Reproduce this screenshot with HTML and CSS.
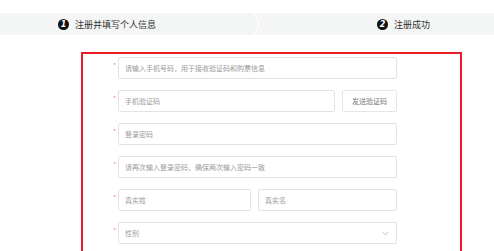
FILE: index.html
```html
<!DOCTYPE html>
<html lang="zh-CN">
<head>
    <meta charset="UTF-8">
    <meta name="viewport" content="width=device-width, initial-scale=1.0">
    <title>注册</title>
    <link rel="stylesheet" href="styles.css">
</head>
<body>
    <div class="steps">
        <div class="step step-one">
            <span class="step-num">1</span>
            <span class="step-text">注册并填写个人信息</span>
        </div>
        <svg class="step-arrow" width="8" height="22" viewBox="0 0 8 22">
            <polyline points="1,0 6,11 1,22" fill="none" stroke="#ffffff" stroke-width="1.2"/>
        </svg>
        <div class="step step-two">
            <span class="step-num">2</span>
            <span class="step-text">注册成功</span>
        </div>
    </div>

    <form class="reg-box">
        <div class="row">
            <span class="star">*</span>
            <input class="field w-full" type="text" placeholder="请输入手机号码，用于接收验证码和购票信息">
        </div>
        <div class="row">
            <span class="star">*</span>
            <input class="field w-code" type="text" placeholder="手机验证码">
            <button type="button" class="send-btn">发送验证码</button>
        </div>
        <div class="row">
            <span class="star">*</span>
            <input class="field w-full" type="password" placeholder="登录密码">
        </div>
        <div class="row">
            <span class="star">*</span>
            <input class="field w-full" type="password" placeholder="请再次输入登录密码，确保两次输入密码一致">
        </div>
        <div class="row">
            <span class="star">*</span>
            <input class="field w-surname" type="text" placeholder="真实姓">
            <input class="field w-name" type="text" placeholder="真实名">
        </div>
        <div class="row">
            <span class="star">*</span>
            <div class="field w-full select">
                <span>性别</span>
                <svg width="7" height="5" viewBox="0 0 7 5">
                    <polyline points="0.5,0.8 3.5,3.8 6.5,0.8" fill="none" stroke="#b8b8b8" stroke-width="0.9"/>
                </svg>
            </div>
        </div>
    </form>
</body>
</html>
```

FILE: styles.css
```css
body {
    margin: 0;
    padding: 0;
    background-color: #fff;
    font-family: "Noto Sans CJK SC", "Liberation Sans", sans-serif;
}

.steps {
    margin-top: 13px;
    height: 22px;
    background-color: #f4f5f5;
    display: flex;
    align-items: center;
}

.step {
    display: flex;
    align-items: center;
    height: 22px;
}

.step-one {
    width: 195px;
    padding-left: 58px;
}

.step-two {
    margin-left: 116px;
}

.step-arrow {
    display: block;
}

.step-num {
    width: 11px;
    height: 11px;
    border-radius: 50%;
    background-color: #111;
    color: #fff;
    font-family: "DejaVu Sans", sans-serif;
    font-size: 8px;
    font-weight: bold;
    font-style: italic;
    line-height: 11px;
    text-align: center;
    margin-right: 6px;
}

.step-text {
    font-size: 9px;
    color: #333;
    line-height: 11px;
}

.reg-box {
    margin: 17px 0 0 81px;
    width: 377px;
    height: 220px;
    border: 2px solid #ec1c24;
    padding-top: 3px;
}

.row {
    display: flex;
    align-items: center;
    margin-bottom: 11px;
    padding-left: 30px;
}

.star {
    width: 5px;
    color: #f08a8a;
    font-size: 7px;
    align-self: flex-start;
    margin-top: 3px;
}

.field {
    box-sizing: border-box;
    height: 22px;
    border: 1px solid #e3e3e3;
    border-radius: 2px;
    padding: 0 6px;
    font-family: "Noto Sans CJK SC", sans-serif;
    font-size: 7px;
    color: #555;
    background: #fff;
    outline: none;
}

.field::placeholder {
    color: #9a9a9a;
}

.w-full {
    width: 279px;
}

.w-code {
    width: 217px;
}

.w-surname {
    width: 133px;
}

.w-name {
    width: 139px;
    margin-left: 7px;
}

.send-btn {
    box-sizing: border-box;
    width: 55px;
    height: 22px;
    margin-left: 7px;
    border: 1px solid #e6e6e6;
    border-radius: 2px;
    background: #fff;
    font-family: "Noto Sans CJK SC", sans-serif;
    font-size: 7px;
    color: #777;
    padding: 0;
}

.select {
    display: flex;
    align-items: center;
    justify-content: space-between;
    color: #9a9a9a;
    padding-right: 7px;
}
```
